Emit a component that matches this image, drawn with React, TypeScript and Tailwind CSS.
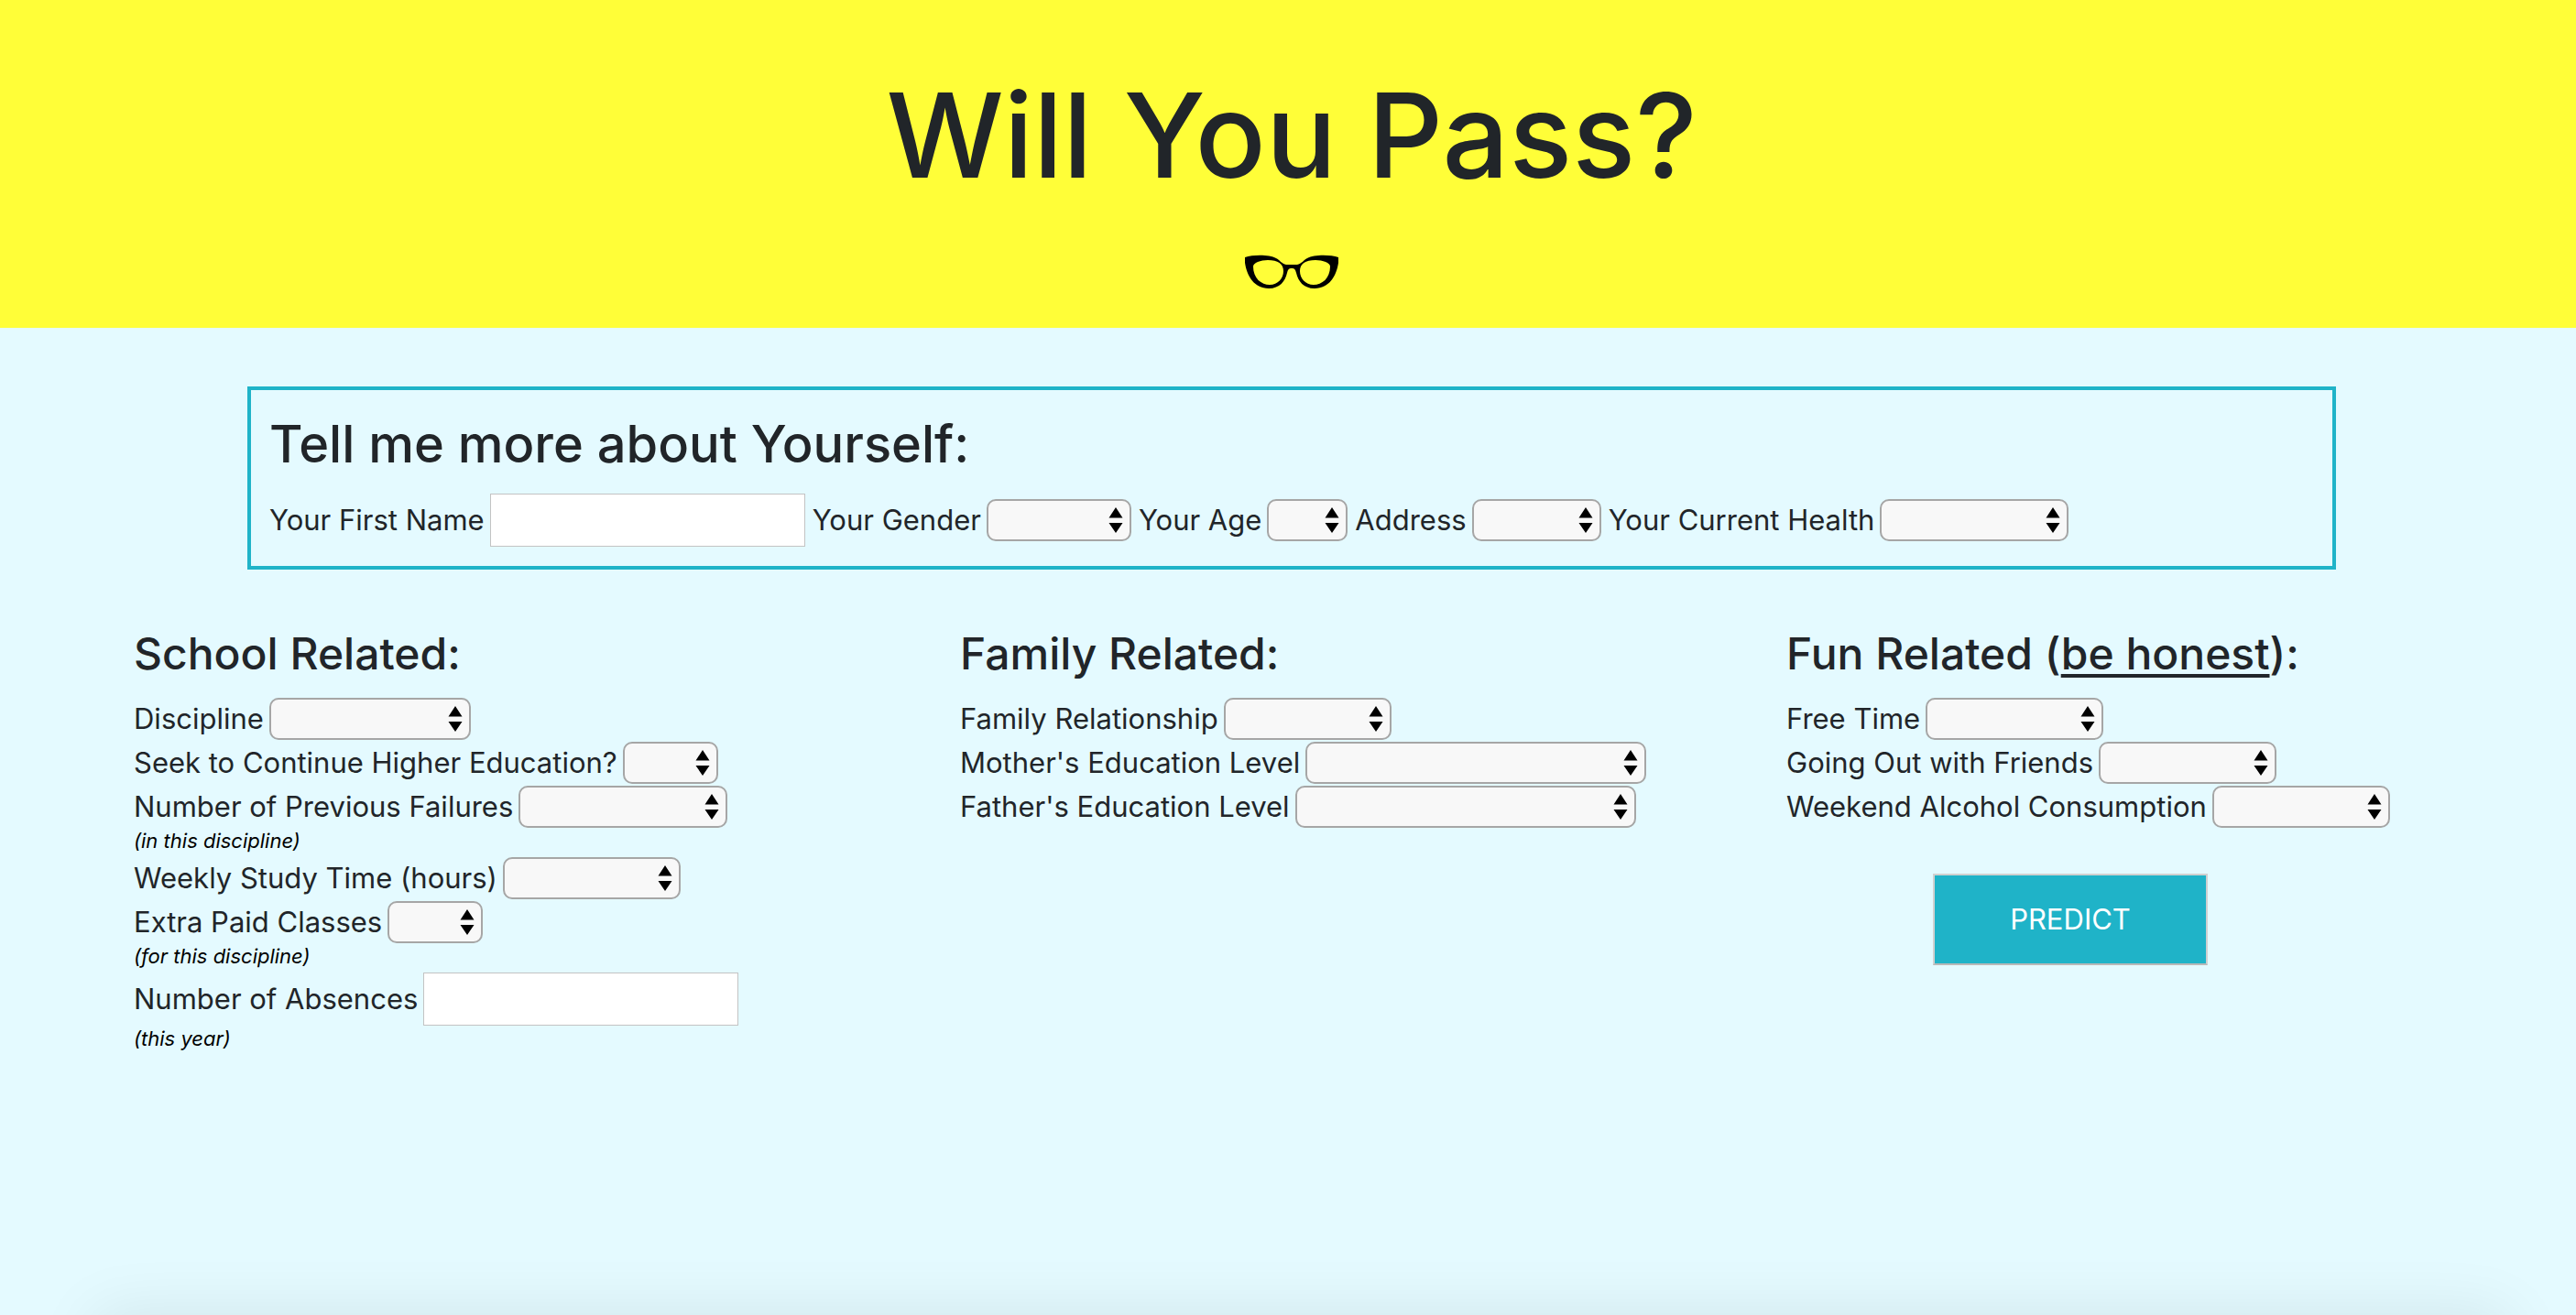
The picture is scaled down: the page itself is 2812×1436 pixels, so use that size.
import { useId } from "react";
import type { ReactNode } from "react";

function SelectField({ label, width, options }: { label: string; width: string; options: string[] }) {
  const id = useId();
  return (
    <div className="flex h-12 items-center gap-1.5">
      <label htmlFor={id} className="whitespace-nowrap">{label}</label>
      <div className={`relative h-[46px] shrink-0 ${width}`}>
        <select
          id={id}
          defaultValue=""
          className="h-full w-full appearance-none rounded-[10px] border-2 border-[#a6a6a6] bg-[#f8f8f8] pl-3 pr-8"
        >
          <option value="" />
          {options.map((o) => (
            <option key={o}>{o}</option>
          ))}
        </select>
        <svg viewBox="0 0 16 28" className="pointer-events-none absolute right-[9px] top-[9px] h-7 w-4" aria-hidden="true">
          <path d="M8 0 15.5 11.5H.5ZM8 28 .5 17h15Z" fill="#000" />
        </svg>
      </div>
    </div>
  );
}

function TextField({ label }: { label: string }) {
  const id = useId();
  return (
    <div className="flex h-15 items-center gap-1.5">
      <label htmlFor={id} className="whitespace-nowrap">{label}</label>
      <input id={id} type="text" className="h-[58px] w-[344px] border border-[#c3c3c3] bg-white px-2" />
    </div>
  );
}

function Note({ children }: { children: ReactNode }) {
  return <p className="h-[30px] text-[22px] leading-[26px] italic text-black">{children}</p>;
}

function Section({ title, children }: { title: ReactNode; children: ReactNode }) {
  return (
    <section>
      <h3 className="mb-[11px] whitespace-nowrap text-5xl/[72px] font-medium">{title}</h3>
      {children}
    </section>
  );
}

const levels = ["Very low", "Low", "Average", "High", "Very high"];
const education = ["None", "Primary education", "5th to 9th grade", "Secondary education", "Higher education"];

export default function App() {
  return (
    <div className="relative min-h-screen overflow-hidden bg-[#e4faff] font-['Inter',sans-serif] text-[31px] leading-[48px] text-[#212529]">
      <header className="flex flex-col items-center bg-[#fffe38] pb-[42px] pl-2 pt-16">
        <h1 className="text-9xl/[168px] font-medium">Will You Pass?</h1>
        <svg viewBox="0 0 102 38" className="mt-[46px] h-[38px] w-[102px]" role="img" aria-label="Glasses">
          <path
            fillRule="evenodd"
            d="M0 3C9 0 27 0 34 4c4 2 6 6 11 7h12c5-1 7-5 11-7 7-4 25-4 34-1v6c-2 14-10 28-26 28-12 0-18-8-20-17-1-4-2-5-5-5s-4 1-5 5c-2 9-8 17-20 17C10 37 2 23 0 9ZM9 13c0 13 9 20 18 20s15-7 15-15S36 6 25 6C17 6 9 9 9 13Zm84 0c0-4-8-7-16-7C66 6 60 10 60 18s6 15 15 15 18-7 18-20Z"
            fill="#000"
          />
        </svg>
      </header>

      <form onSubmit={(e) => e.preventDefault()}>
        <div className="pl-2 pt-16">
          <section className="mx-auto max-w-[2280px] border-4 border-[#1fb3c8] p-5">
            <h2 className="mb-[14px] text-[56px] font-medium leading-[78px]">Tell me more about Yourself:</h2>
            <div className="flex flex-wrap items-center gap-x-2">
              <TextField label="Your First Name" />
              <SelectField label="Your Gender" width="w-[158px]" options={["Female", "Male"]} />
              <SelectField label="Your Age" width="w-[88px]" options={["15", "16", "17", "18", "19", "20", "21", "22"]} />
              <SelectField label="Address" width="w-[141px]" options={["Urban", "Rural"]} />
              <SelectField label="Your Current Health" width="w-[206px]" options={levels} />
            </div>
          </section>
        </div>

        <div className="grid grid-cols-3 gap-[60px] pl-[146px] pr-5 pt-14">
          <Section title="School Related:">
            <SelectField label="Discipline" width="w-[220px]" options={["Mathematics", "Portuguese"]} />
            <SelectField label="Seek to Continue Higher Education?" width="w-[104px]" options={["Yes", "No"]} />
            <SelectField label="Number of Previous Failures" width="w-[228px]" options={["0", "1", "2", "3", "More than 3"]} />
            <Note>(in this discipline)</Note>
            <SelectField label="Weekly Study Time (hours)" width="w-[194px]" options={["Under 2", "2 to 5", "5 to 10", "Over 10"]} />
            <SelectField label="Extra Paid Classes" width="w-[104px]" options={["Yes", "No"]} />
            <Note>(for this discipline)</Note>
            <TextField label="Number of Absences" />
            <Note>(this year)</Note>
          </Section>

          <Section title="Family Related:">
            <SelectField label="Family Relationship" width="w-[183px]" options={levels} />
            <SelectField label="Mother's Education Level" width="w-[372px]" options={education} />
            <SelectField label="Father's Education Level" width="w-[372px]" options={education} />
          </Section>

          <Section title={<>Fun Related (<u className="decoration-4 underline-offset-[5px]">be honest</u>):</>}>
            <SelectField label="Free Time" width="w-[194px]" options={levels} />
            <SelectField label="Going Out with Friends" width="w-[194px]" options={levels} />
            <SelectField label="Weekend Alcohol Consumption" width="w-[194px]" options={levels} />
            <button
              type="submit"
              className="ml-40 mt-[49px] h-[100px] w-[300px] border-2 border-[#d0d0d0] border-b-[#b8b8b8] bg-[#1fb3c8] text-white"
            >
              PREDICT
            </button>
          </Section>
        </div>
      </form>

      <div className="absolute left-[105px] right-[75px] top-full h-40 shadow-[0_0_70px_rgba(0,0,0,0.09)]" />
    </div>
  );
}
